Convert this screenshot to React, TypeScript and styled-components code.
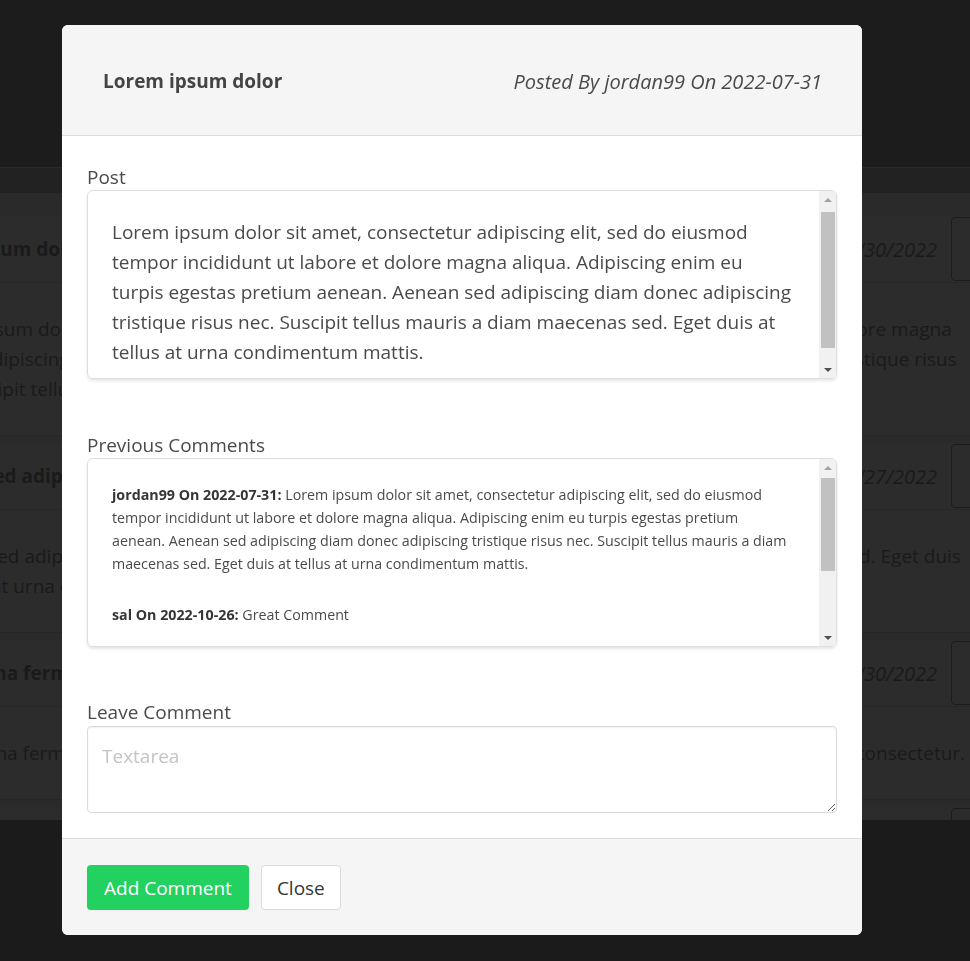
import React from 'react';
import styled, { createGlobalStyle } from 'styled-components';

const GlobalStyle = createGlobalStyle`
  html, body {
    margin: 0;
    padding: 0;
    overflow: hidden;
    background: #1b1b1b;
  }
  body {
    font-family: "Open Sans", "Noto Sans", sans-serif;
  }
  * {
    box-sizing: border-box;
  }
`;

interface FeedPost {
  id: number;
  title: string;
  date: string;
  body: string;
}

interface Comment {
  id: number;
  author: string;
  date: string;
  text: string;
}

const LOREM =
  'Lorem ipsum dolor sit amet, consectetur adipiscing elit, sed do eiusmod tempor incididunt ut labore et dolore magna aliqua. Adipiscing enim eu turpis egestas pretium aenean. Aenean sed adipiscing diam donec adipiscing tristique risus nec. Suscipit tellus mauris a diam maecenas sed. Eget duis at tellus at urna condimentum mattis.';

const feed: FeedPost[] = [
  { id: 1, title: 'Lorem ipsum dolor', date: '07/30/2022', body: LOREM },
  {
    id: 2,
    title: 'Aenean sed adipiscing',
    date: '07/27/2022',
    body: 'Aenean sed adipiscing diam donec adipiscing tristique risus nec. Suscipit tellus mauris a diam maecenas sed. Eget duis at tellus at urna condimentum mattis.',
  },
  {
    id: 3,
    title: 'Mattis urna fermentum',
    date: '07/30/2022',
    body: 'Mattis urna fermentum odio facilisis mauris sit amet massa vitae tortor condimentum lacinia quis vel eros consectetur.',
  },
  { id: 4, title: 'Lorem ipsum dolor', date: '07/30/2022', body: LOREM },
];

const comments: Comment[] = [
  { id: 1, author: 'jordan99', date: '2022-07-31', text: LOREM },
  { id: 2, author: 'sal', date: '2022-10-26', text: 'Great Comment' },
];

const ScrollBar = ({ offset, size }: { offset: number; size: number }) => (
  <Track>
    <ArrowButton>
      <Arrow $dir="up" />
    </ArrowButton>
    <Rail>
      <Thumb $offset={offset} $size={size} />
    </Rail>
    <ArrowButton>
      <Arrow $dir="down" />
    </ArrowButton>
  </Track>
);

const App = () => {
  return (
    <Page>
      <GlobalStyle />
      <TopBar />
      <SubBar />
      <Feed>
        <CardList>
          {feed.map((post) => (
            <Card key={post.id}>
              <CardHead>
                <CardTitle>{post.title}</CardTitle>
                <CardMeta>
                  <CardDate>{post.date}</CardDate>
                  <CardButton />
                </CardMeta>
              </CardHead>
              <CardBody>{post.body}</CardBody>
            </Card>
          ))}
        </CardList>
      </Feed>

      <Backdrop>
        <ModalCard>
          <ModalHead>
            <ModalTitle>Lorem ipsum dolor</ModalTitle>
            <PostedBy>Posted By jordan99 On 2022-07-31</PostedBy>
          </ModalHead>

          <ModalBody>
            <Field>
              <FieldLabel>Post</FieldLabel>
              <ScrollBox>
                <PostText>{LOREM}</PostText>
                <ScrollBar offset={4} size={136} />
              </ScrollBox>
            </Field>

            <Field $space={54}>
              <FieldLabel>Previous Comments</FieldLabel>
              <ScrollBox>
                <CommentList>
                  {comments.map((c) => (
                    <CommentItem key={c.id}>
                      <strong>
                        {c.author} On {c.date}:
                      </strong>{' '}
                      {c.text}
                    </CommentItem>
                  ))}
                </CommentList>
                <ScrollBar offset={2} size={93} />
              </ScrollBox>
            </Field>

            <Field $space={53}>
              <FieldLabel>Leave Comment</FieldLabel>
              <CommentInput placeholder="Textarea" />
            </Field>
          </ModalBody>

          <ModalFoot>
            <Button $variant="success">Add Comment</Button>
            <Button>Close</Button>
          </ModalFoot>
        </ModalCard>
      </Backdrop>
    </Page>
  );
};

export default App;

/* background page (dimmed) */
const Page = styled.div`
  width: 970px;
  height: 961px;
  overflow: hidden;
  background: #1b1b1b;
`;
const TopBar = styled.div`
  height: 168px;
  background: #1c1c1c;
  border-bottom: 1px solid #2a2a2a;
`;
const SubBar = styled.div`
  height: 25px;
  background: #222222;
`;
const Feed = styled.div`
  height: 627px;
  overflow: hidden;
  background: #2a2a2a;
  padding-top: 23px;
`;
const CardList = styled.div`
  margin-left: -100px;
  width: 1115px;
  display: flex;
  flex-direction: column;
  gap: 8px;
`;
const Card = styled.div`
  background: #2c2c2c;
  box-shadow: 0 1px 0 #262626;
`;
const CardHead = styled.div`
  height: 67px;
  display: flex;
  align-items: center;
  justify-content: space-between;
  padding: 0 16px 0 7px;
  border-bottom: 1px solid #272727;
`;
const CardTitle = styled.div`
  font-size: 19px;
  font-weight: 700;
  color: #1a1a1a;
`;
const CardMeta = styled.div`
  display: flex;
  align-items: center;
  gap: 14px;
  height: 100%;
`;
const CardDate = styled.div`
  font-size: 20px;
  font-style: italic;
  color: #1a1a1a;
`;
const CardButton = styled.div`
  width: 48px;
  height: 64px;
  border: 1px solid #1c1c1c;
  border-radius: 4px;
`;
const CardBody = styled.div`
  padding: 31px 42px 31px 16px;
  font-size: 19px;
  line-height: 30px;
  color: #1a1a1a;
`;

/* modal */
const Backdrop = styled.div`
  position: fixed;
  inset: 0;
  display: flex;
  align-items: flex-start;
  padding: 25px 0 0 62px;
`;
const ModalCard = styled.div`
  width: 800px;
  background: #ffffff;
  border-radius: 6px;
  overflow: hidden;
  display: flex;
  flex-direction: column;
`;
const ModalHead = styled.header`
  height: 111px;
  background: #f5f5f5;
  border-bottom: 1px solid #dbdbdb;
  display: flex;
  align-items: center;
  justify-content: space-between;
  padding: 2px 40px 0 41px;
`;
const ModalTitle = styled.h2`
  margin: 0;
  font-size: 19px;
  font-weight: 700;
  color: #444444;
`;
const PostedBy = styled.span`
  font-size: 20px;
  font-style: italic;
  color: #4a4a4a;
`;
const ModalBody = styled.section`
  padding: 29px 25px 25px;
  display: flex;
  flex-direction: column;
`;
const Field = styled.div<{ $space?: number }>`
  display: flex;
  flex-direction: column;
  gap: 1px;
  margin-top: ${(p) => p.$space ?? 0}px;
`;
const FieldLabel = styled.label`
  font-size: 19px;
  line-height: 24px;
  color: #4a4a4a;
`;
const ScrollBox = styled.div`
  height: 189px;
  display: flex;
  border: 1px solid #dedede;
  border-radius: 6px;
  overflow: hidden;
  box-shadow: 0 2px 3px rgba(10, 10, 10, 0.1);
`;
const PostText = styled.p`
  flex: 1;
  margin: 0;
  padding: 26px 24px 0 24px;
  font-size: 19px;
  line-height: 30px;
  color: #4a4a4a;
  overflow: hidden;
`;
const CommentList = styled.div`
  flex: 1;
  padding: 24px 28px 0 24px;
  overflow: hidden;
`;
const CommentItem = styled.p`
  margin: 0 0 28px;
  font-size: 14.25px;
  line-height: 23px;
  color: #4a4a4a;
  strong {
    color: #363636;
    font-weight: 700;
  }
`;
const Track = styled.div`
  width: 17px;
  flex-shrink: 0;
  background: #f1f1f1;
  display: flex;
  flex-direction: column;
`;
const ArrowButton = styled.div`
  height: 17px;
  display: flex;
  align-items: center;
  justify-content: center;
`;
const Arrow = styled.span<{ $dir: 'up' | 'down' }>`
  width: 0;
  height: 0;
  border-left: 4px solid transparent;
  border-right: 4px solid transparent;
  ${(p) =>
    p.$dir === 'up'
      ? 'border-bottom: 4px solid #a3a3a3;'
      : 'border-top: 4px solid #505050;'}
`;
const Rail = styled.div`
  flex: 1;
  padding: 0 1px 0 2px;
`;
const Thumb = styled.div<{ $offset: number; $size: number }>`
  margin-top: ${(p) => p.$offset}px;
  height: ${(p) => p.$size}px;
  background: #c1c1c1;
`;
const CommentInput = styled.textarea`
  margin-top: 1px;
  height: 87px;
  resize: vertical;
  border: 1px solid #dbdbdb;
  border-radius: 4px;
  box-shadow: inset 0 1px 2px rgba(10, 10, 10, 0.06);
  padding: 14px 14px 10px;
  font-family: "Open Sans", "Noto Sans", sans-serif;
  font-size: 19px;
  line-height: 30px;
  color: #363636;
  outline: none;
  &::placeholder {
    color: #c4c4c4;
  }
`;
const ModalFoot = styled.footer`
  background: #f5f5f5;
  border-top: 1px solid #dbdbdb;
  padding: 26px 25px 25px;
  display: flex;
  gap: 12px;
`;
const Button = styled.button<{ $variant?: 'success' }>`
  height: 45px;
  padding: 0 ${(p) => (p.$variant === 'success' ? '16px' : '15px')};
  border-radius: 4px;
  font-family: "Open Sans", "Noto Sans", sans-serif;
  font-size: 19px;
  cursor: pointer;
  border: 1px solid ${(p) => (p.$variant === 'success' ? 'transparent' : '#dbdbdb')};
  background: ${(p) => (p.$variant === 'success' ? '#23d160' : '#ffffff')};
  color: ${(p) => (p.$variant === 'success' ? '#ffffff' : '#363636')};
`;
